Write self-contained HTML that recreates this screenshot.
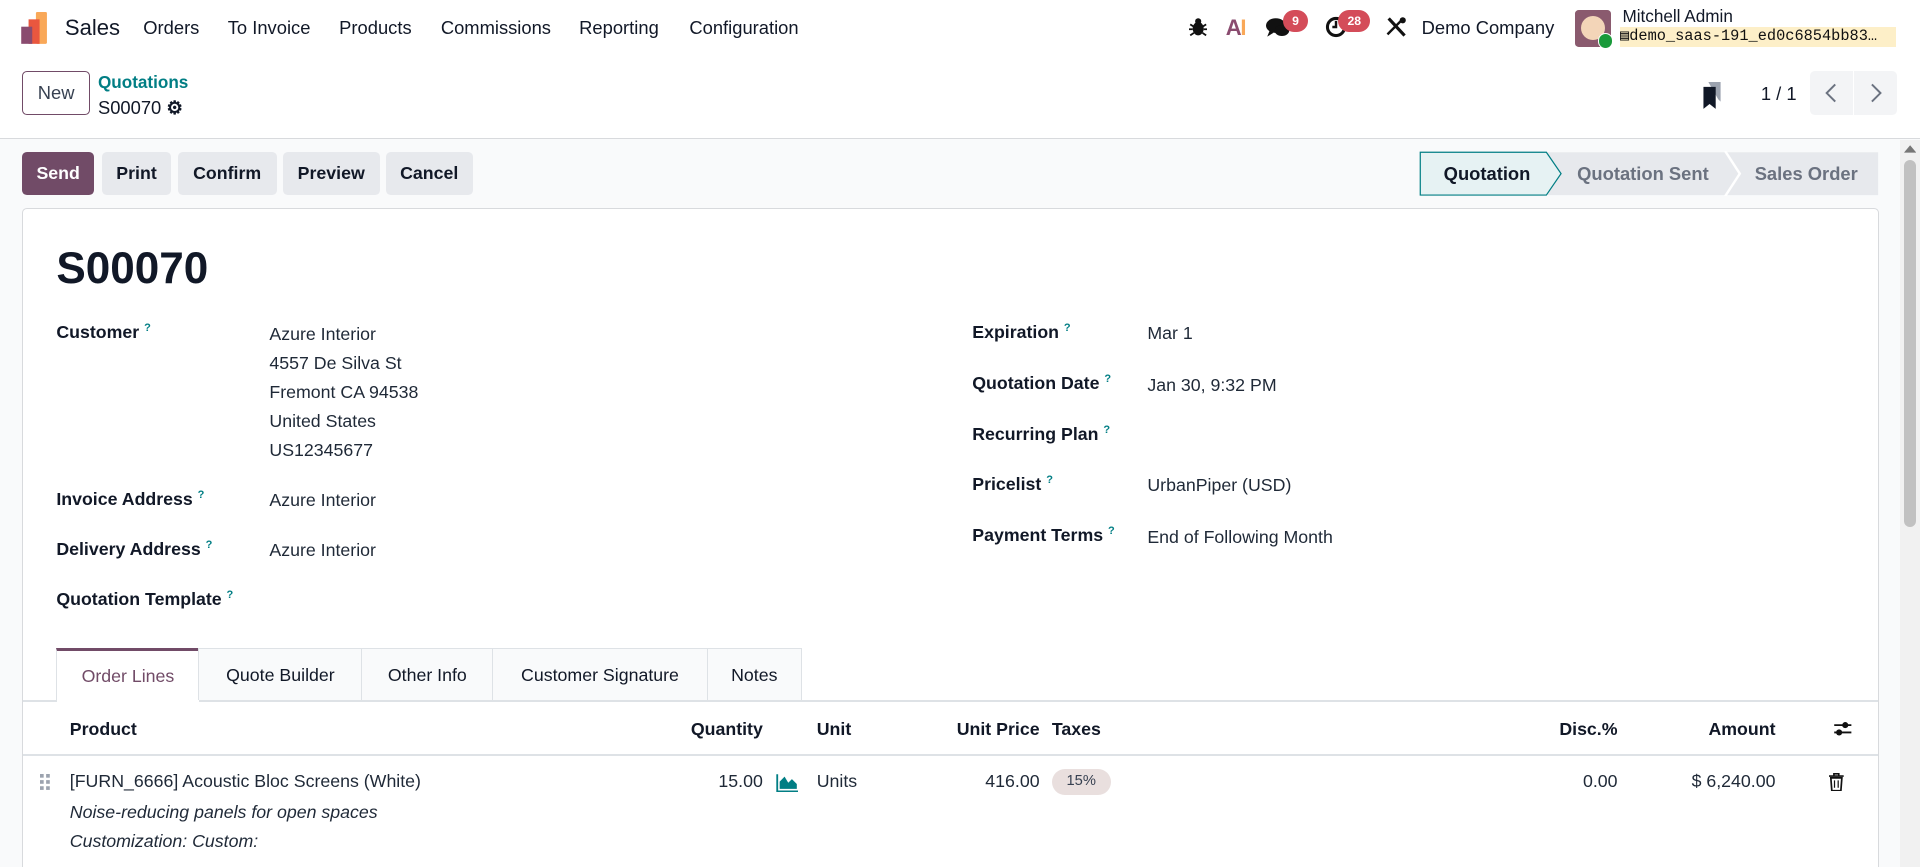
<!DOCTYPE html>
<html><head><meta charset="utf-8">
<style>
html,body{margin:0;padding:0;width:1920px;height:867px;overflow:hidden;background:#f9fafb}
#w{zoom:1.22449;width:1568px;height:708px;overflow:hidden;position:relative;background:#f9fafb;font-family:"Liberation Sans",sans-serif;color:#1f2937;font-size:14.5px}
.a{position:absolute;white-space:nowrap}
.b{font-weight:bold;color:#111827}
.top{position:absolute;left:0;top:0;width:1568px;height:113px;background:#fff;border-bottom:1px solid #d8dadd}
.btn{position:absolute;top:124px;height:35px;line-height:35px;text-align:center;border-radius:4px;background:#e7e9ed;font-weight:bold;color:#111827;font-size:14.5px}
.q{color:#017e84;font-size:9px;vertical-align:top;margin-left:4px;font-weight:bold}
.tab{position:absolute;top:529px;height:43px;line-height:44px;text-align:center;background:#f9fafb;border:1px solid #dee2e6;border-bottom:none;box-sizing:border-box;font-size:14.5px;color:#111827}
</style></head><body><div id="w">
<div class="top">
  <svg class="a" style="left:16px;top:10px" width="26" height="26" viewBox="0 0 26 26"><rect x="13" y="0" width="9" height="26" fill="#f9a858" rx="1"/><rect x="7" y="6" width="9" height="20" fill="#e9573f"/><rect x="1" y="12" width="9" height="14" fill="#8a4b6f"/></svg>
  <div class="a" style="left:53px;top:12px;font-size:18px;color:#111827">Sales</div>
  <div class="a" style="left:117px;top:14px;font-size:15px;color:#111827">Orders</div>
  <div class="a" style="left:186px;top:14px;font-size:15px;color:#111827">To Invoice</div>
  <div class="a" style="left:277px;top:14px;font-size:15px;color:#111827">Products</div>
  <div class="a" style="left:360px;top:14px;font-size:15px;color:#111827">Commissions</div>
  <div class="a" style="left:473px;top:14px;font-size:15px;color:#111827">Reporting</div>
  <div class="a" style="left:563px;top:14px;font-size:15px;color:#111827">Configuration</div>
  <svg class="a" style="left:971px;top:14px" width="15" height="16" viewBox="0 0 15 16"><ellipse cx="7.5" cy="9.5" rx="4.5" ry="5.5" fill="#111"/><circle cx="7.5" cy="3.5" r="2.5" fill="#111"/><path d="M1 6l3 2M14 6l-3 2M0 10h3M15 10h-3M1 15l3-2M14 15l-3-2" stroke="#111" stroke-width="1.5"/></svg>
  <div class="a" style="left:1001px;top:12px;font-size:18px;font-weight:bold;color:#8a4b6f;letter-spacing:-1px">A<span style="color:#f9a858">I</span></div>
  <svg class="a" style="left:1034px;top:14px" width="20" height="18" viewBox="0 0 20 18"><ellipse cx="8" cy="7" rx="8" ry="6" fill="#111"/><path d="M3 11l-2 5 5-3z" fill="#111"/><ellipse cx="13" cy="11" rx="6" ry="4.5" fill="#111"/></svg>
  <div class="a" style="left:1048px;top:8px;width:20px;height:18px;border-radius:9px;background:#d44c59;color:#fff;font-size:10px;font-weight:bold;text-align:center;line-height:18px">9</div>
  <svg class="a" style="left:1082px;top:13px" width="18" height="18" viewBox="0 0 18 18"><circle cx="9" cy="9" r="7" fill="none" stroke="#111" stroke-width="2.5"/><path d="M9 4v5h-3" stroke="#111" stroke-width="2" fill="none"/></svg>
  <div class="a" style="left:1093px;top:8px;width:26px;height:18px;border-radius:9px;background:#d44c59;color:#fff;font-size:10px;font-weight:bold;text-align:center;line-height:18px">28</div>
  <svg class="a" style="left:1131px;top:13px" width="18" height="18" viewBox="0 0 18 18"><path d="M3 2l13 14" stroke="#111" stroke-width="2.6"/><path d="M15 2L2 15" stroke="#111" stroke-width="2"/><circle cx="14.5" cy="3.5" r="2.5" fill="#111"/></svg>
  <div class="a" style="left:1161px;top:14px;font-size:15px;color:#111827">Demo Company</div>
  <div class="a" style="left:1286px;top:8px;width:30px;height:30px;border-radius:3px;background:#8a5a6e"></div>
  <div class="a" style="left:1291px;top:13px;width:20px;height:20px;border-radius:50%;background:#f3d5b8"></div>
  <div class="a" style="left:1305px;top:27px;width:11px;height:11px;border-radius:50%;background:#1a9a3a;border:1px solid #fff"></div>
  <div class="a" style="left:1325px;top:5px;font-size:14px;color:#111827">Mitchell Admin</div>
  <div class="a" style="left:1323px;top:22px;width:225px;height:16px;background:#fdefc8;font-family:'Liberation Mono',monospace;font-size:12.5px;line-height:16px;color:#111">&#9636;demo_saas-191_ed0c6854bb83…</div>

  <div class="a" style="left:18px;top:58px;width:54px;height:34px;border:1px solid #714b67;border-radius:4px;text-align:center;line-height:34px;font-size:15px;color:#374151">New</div>
  <div class="a" style="left:80px;top:59px;font-size:14px;font-weight:bold;color:#017e84">Quotations</div>
  <div class="a" style="left:80px;top:79px;font-size:15px;color:#111827">S00070 <span style="font-size:15px;font-weight:bold">&#9881;</span></div>
  <svg class="a" style="left:1389px;top:67px" width="18" height="22" viewBox="0 0 18 22"><path d="M6 0h10v16l-2-2z" fill="#9ca3af"/><path d="M2 4h10v18l-5-4-5 4z" fill="#111827"/></svg>
  <div class="a" style="left:1438px;top:68px;font-size:15px;color:#111827">1 / 1</div>
  <div class="a" style="left:1478px;top:58px;width:35px;height:36px;background:#f3f4f6;border-radius:4px 0 0 4px"></div>
  <div class="a" style="left:1514px;top:58px;width:35px;height:36px;background:#f3f4f6;border-radius:0 4px 4px 0"></div>
  <svg class="a" style="left:1489px;top:67px" width="14" height="18"><path d="M10 2L3 9l7 7" stroke="#6b7280" stroke-width="1.6" fill="none"/></svg>
  <svg class="a" style="left:1525px;top:67px" width="14" height="18"><path d="M4 2l7 7-7 7" stroke="#6b7280" stroke-width="1.6" fill="none"/></svg>
</div>

<div class="btn" style="left:18px;width:59px;background:#714b67;color:#fff">Send</div>
<div class="btn" style="left:83px;width:57px">Print</div>
<div class="btn" style="left:145px;width:81px">Confirm</div>
<div class="btn" style="left:231px;width:79px">Preview</div>
<div class="btn" style="left:315px;width:71px">Cancel</div>

<svg class="a" style="left:1159px;top:123px" width="376" height="37" viewBox="0 0 376 37">
  <path d="M105 1H375V36H105z" fill="#e7e9ed"/>
  <path d="M250 0l12 18.5L250 37" stroke="#fff" stroke-width="2" fill="none"/>
  <path d="M1 1H104L116 18.5 104 36H1z" fill="#e6f2f3" stroke="#017e84" stroke-width="1"/>
</svg>
<div class="a b" style="left:1179px;top:133px;font-size:15px">Quotation</div>
<div class="a" style="left:1288px;top:133px;font-size:15px;color:#6b7280;font-weight:bold">Quotation Sent</div>
<div class="a" style="left:1433px;top:133px;font-size:15px;color:#6b7280;font-weight:bold">Sales Order</div>

<div class="a" style="left:18px;top:170px;width:1515px;height:537px;background:#fff;border:1px solid #d8dadd;border-bottom:none;border-radius:4px 4px 0 0"></div>
<div class="a b" style="left:46px;top:199px;font-size:36px">S00070</div>

<div class="a b" style="left:46px;top:263px">Customer<span class="q">?</span></div>
<div class="a" style="left:220px;top:261px;line-height:23.8px">Azure Interior<br>4557 De Silva St<br>Fremont CA 94538<br>United States<br>US12345677</div>
<div class="a b" style="left:46px;top:399px">Invoice Address<span class="q">?</span></div>
<div class="a" style="left:220px;top:400px">Azure Interior</div>
<div class="a b" style="left:46px;top:440px">Delivery Address<span class="q">?</span></div>
<div class="a" style="left:220px;top:441px">Azure Interior</div>
<div class="a b" style="left:46px;top:481px">Quotation Template<span class="q">?</span></div>

<div class="a b" style="left:794px;top:263px">Expiration<span class="q">?</span></div>
<div class="a" style="left:937px;top:264px">Mar 1</div>
<div class="a b" style="left:794px;top:305px">Quotation Date<span class="q">?</span></div>
<div class="a" style="left:937px;top:306px">Jan 30, 9:32 PM</div>
<div class="a b" style="left:794px;top:346px">Recurring Plan<span class="q">?</span></div>
<div class="a b" style="left:794px;top:387px">Pricelist<span class="q">?</span></div>
<div class="a" style="left:937px;top:388px">UrbanPiper (USD)</div>
<div class="a b" style="left:794px;top:429px">Payment Terms<span class="q">?</span></div>
<div class="a" style="left:937px;top:430px">End of Following Month</div>

<div class="a" style="left:19px;top:572px;width:1515px;height:1px;background:#dee2e6"></div>
<div class="tab" style="left:46px;width:117px;background:#fff;border-top:3px solid #714b67;color:#714b67;height:44px;line-height:42px">Order Lines</div>
<div class="tab" style="left:162px;width:134px">Quote Builder</div>
<div class="tab" style="left:295px;width:108px">Other Info</div>
<div class="tab" style="left:402px;width:176px">Customer Signature</div>
<div class="tab" style="left:577px;width:78px">Notes</div>

<div class="a b" style="left:57px;top:587px">Product</div>
<div class="a b" style="left:523px;width:100px;text-align:right;top:587px">Quantity</div>
<div class="a b" style="left:667px;top:587px">Unit</div>
<div class="a b" style="left:749px;width:100px;text-align:right;top:587px">Unit Price</div>
<div class="a b" style="left:859px;top:587px">Taxes</div>
<div class="a b" style="left:1221px;width:100px;text-align:right;top:587px">Disc.%</div>
<div class="a b" style="left:1350px;width:100px;text-align:right;top:587px">Amount</div>
<svg class="a" style="left:1497px;top:587px" width="16" height="16"><path d="M1 5h14M1 11h14" stroke="#111" stroke-width="1.5"/><circle cx="10" cy="5" r="2.5" fill="#111"/><circle cx="5" cy="11" r="2.5" fill="#111"/></svg>
<div class="a" style="left:19px;top:616px;width:1515px;height:1px;background:#dee2e6"></div>

<svg class="a" style="left:33px;top:632px" width="8" height="14"><g fill="#9ca3af"><rect x="0" y="0" width="3" height="3"/><rect x="5" y="0" width="3" height="3"/><rect x="0" y="5" width="3" height="3"/><rect x="5" y="5" width="3" height="3"/><rect x="0" y="10" width="3" height="3"/><rect x="5" y="10" width="3" height="3"/></g></svg>
<div class="a" style="left:57px;top:630px">[FURN_6666] Acoustic Bloc Screens (White)</div>
<div class="a" style="left:57px;top:655px;font-style:italic">Noise-reducing panels for open spaces</div>
<div class="a" style="left:57px;top:679px;font-style:italic">Customization: Custom:</div>
<div class="a" style="left:523px;width:100px;text-align:right;top:630px">15.00</div>
<svg class="a" style="left:634px;top:631px" width="18" height="16"><path d="M1 1v14h17" stroke="#017e84" stroke-width="1.5" fill="none"/><path d="M3 13V7l4-4 3 5 3-3 4 4v4z" fill="#017e84"/></svg>
<div class="a" style="left:667px;top:630px">Units</div>
<div class="a" style="left:749px;width:100px;text-align:right;top:630px">416.00</div>
<div class="a" style="left:859px;top:628px;width:48px;height:21px;border-radius:11px;background:#e9dfde;font-size:12px;text-align:center;line-height:21px;color:#374151">15%</div>
<div class="a" style="left:1221px;width:100px;text-align:right;top:630px">0.00</div>
<div class="a" style="left:1350px;width:100px;text-align:right;top:630px">$ 6,240.00</div>
<svg class="a" style="left:1494px;top:631px" width="12" height="15"><path d="M0 2.5h12M4 2.5V0.7h4v1.8" stroke="#111" stroke-width="1.3" fill="none"/><path d="M1.5 4h9l-0.8 10.5H2.3z" fill="none" stroke="#111" stroke-width="1.4"/><path d="M4.5 6v6M7.5 6v6" stroke="#111" stroke-width="1"/></svg>

<div class="a" style="left:1552px;top:114px;width:16px;height:594px;background:#f1f1f1"></div>
<svg class="a" style="left:1555px;top:118px" width="10" height="8"><path d="M0 7l5-6 5 6z" fill="#777"/></svg>
<div class="a" style="left:1555px;top:131px;width:10px;height:299px;border-radius:5px;background:#c1c1c1"></div>
</div></body></html>
